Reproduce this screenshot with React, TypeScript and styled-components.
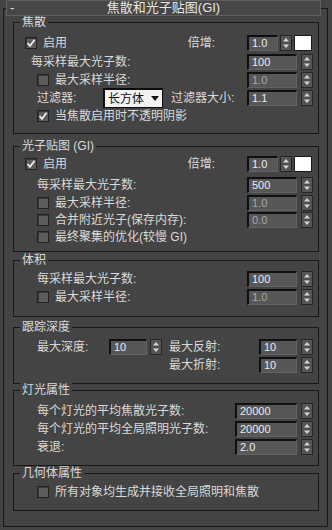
import React from "react";
import styled, { createGlobalStyle } from "styled-components";

const Global = createGlobalStyle`
  html, body { margin: 0; padding: 0; background: #444444; }
  body {
    width: 332px; height: 530px; overflow: hidden;
    font-family: "Liberation Sans", "Noto Sans CJK SC", sans-serif;
    font-size: 12px; color: #dadada;
  }
  * { box-sizing: border-box; }
`;

const Page = styled.div`
  width: 332px;
  height: 530px;
  display: flex;
  flex-direction: column;
`;

const Header = styled.div`
  position: relative;
  z-index: 1;
  margin-left: 6px;
  width: 315px;
  height: 16px;
  border: 1px solid #5f5f5f;
  background: #474747;
  display: grid;
  grid-template-columns: 20px 1fr 20px;
  align-items: center;
  line-height: 14px;
  color: #e6e6e6;
`;

const Minus = styled.span`
  margin-left: 3px;
  font-size: 13px;
`;

const Title = styled.span`
  text-align: center;
  font-size: 13px;
  white-space: nowrap;
`;

const Frame = styled.div`
  margin: -8px 0 0 3px;
  width: 325px;
  height: 519px;
  border: 1px solid #181818;
  padding: 13px 0 0 9px;
  display: flex;
  flex-direction: column;
`;

const Group = styled.div<{ $mt?: number }>`
  width: 306px;
  border: 1px solid #181818;
  margin-top: ${(p) => p.$mt ?? 0}px;
  display: flex;
  flex-direction: column;
`;

const Legend = styled.div`
  height: 0;
  margin: -1px 0 0 6px;
  display: flex;
  align-items: center;
`;

const LegendText = styled.span`
  background: #444444;
  padding: 0 2px;
  line-height: 14px;
  white-space: nowrap;
`;

const Body = styled.div<{ $pt: number; $pb: number }>`
  padding: ${(p) => p.$pt}px 5px ${(p) => p.$pb}px 0;
  display: flex;
  flex-direction: column;
`;

const Row = styled.div<{ $h?: number; $mt?: number }>`
  height: ${(p) => p.$h ?? 18}px;
  margin-top: ${(p) => p.$mt ?? 0}px;
  display: flex;
  align-items: center;
`;

const Label = styled.span<{ $ml?: number; $mr?: number; $w?: number }>`
  margin-left: ${(p) => p.$ml ?? 0}px;
  margin-right: ${(p) => p.$mr ?? 0}px;
  ${(p) => (p.$w ? `width: ${p.$w}px;` : "")}
  flex: none;
  white-space: nowrap;
  line-height: 16px;
`;

const Spacer = styled.span`
  flex: 1;
`;

const CheckBox = styled.span<{ $ml?: number }>`
  margin-left: ${(p) => p.$ml ?? 0}px;
  width: 12px;
  height: 12px;
  flex: none;
  border: 1px solid #222222;
  background: #5c5c5c;
  box-shadow: inset 1px 1px 0 #3a3a3a;
  display: flex;
  align-items: center;
  justify-content: center;
`;

const SpinBox = styled.span<{ $gap: number }>`
  display: flex;
  align-items: center;
  gap: ${(p) => p.$gap}px;
  flex: none;
`;

const Field = styled.span<{ $w: number; $dim?: boolean }>`
  width: ${(p) => p.$w}px;
  height: 16px;
  border-top: 2px solid #101010;
  border-left: 2px solid #101010;
  border-right: 1px solid #626262;
  border-bottom: 1px solid #626262;
  background: #575757;
  padding-left: 3px;
  font-family: "Liberation Sans", sans-serif;
  font-size: 11px;
  line-height: 13px;
  color: ${(p) => (p.$dim ? "#a8a8a8" : "#e8ecf2")};
`;

const Swatch = styled.span`
  width: 18px;
  height: 16px;
  margin-left: 2px;
  margin-right: 1px;
  background: #ffffff;
  border: 1px solid #1a1a1a;
  flex: none;
`;

const Dropdown = styled.span`
  width: 60px;
  height: 20px;
  flex: none;
  border: 1px solid #0c0c0c;
  border-top-width: 2px;
  border-left-width: 2px;
  background: #f2f2f2;
  color: #101010;
  display: flex;
  align-items: center;
  justify-content: space-between;
  padding: 0 3px 0 3px;
  line-height: 16px;
`;

const Check = ({ ml, on }: { ml?: number; on?: boolean }) => (
  <CheckBox $ml={ml}>
    {on && (
      <svg width="10" height="10" viewBox="0 0 10 10">
        <polyline points="1.5,5 4,7.8 8.6,1.8" fill="none" stroke="#ececec" strokeWidth="1.8" />
      </svg>
    )}
  </CheckBox>
);

const Arrows = () => (
  <svg width="12" height="16" viewBox="0 0 12 16" style={{ flex: "none" }}>
    <rect x="0.5" y="0.5" width="11" height="15" fill="#555555" stroke="#262626" />
    <line x1="1" y1="8" x2="11" y2="8" stroke="#4a4a4a" />
    <polygon points="3,6.5 9,6.5 6,3" fill="#d6d6d6" />
    <polygon points="3,9.5 9,9.5 6,13" fill="#d6d6d6" />
  </svg>
);

const Spinner = ({ w, v, dim, gap = 4 }: { w: number; v: string; dim?: boolean; gap?: number }) => (
  <SpinBox $gap={gap}>
    <Field $w={w} $dim={dim}>{v}</Field>
    <Arrows />
  </SpinBox>
);

const EnableRow = ({ h = 18 }: { h?: number }) => (
  <Row $h={h}>
    <Check ml={11} on />
    <Label $ml={6}>启用</Label>
    <Spacer />
    <Label $mr={32}>倍增:</Label>
    <Spinner w={31} v="1.0" gap={2} />
    <Swatch />
  </Row>
);

export default function App() {
  return (
    <Page>
      <Global />
      <Header>
        <Minus>-</Minus>
        <Title>焦散和光子贴图(GI)</Title>
        <span />
      </Header>
      <Frame>
        <Group>
          <Legend><LegendText>焦散</LegendText></Legend>
          <Body $pt={12} $pb={8}>
            <EnableRow />
            <Row $mt={1}>
              <Label $ml={17}>每采样最大光子数:</Label>
              <Spacer />
              <Spinner w={50} v="100" />
            </Row>
            <Row>
              <Check ml={23} />
              <Label $ml={6}>最大采样半径:</Label>
              <Spacer />
              <Spinner w={50} v="1.0" dim />
            </Row>
            <Row>
              <Label $ml={23} $w={66}>过滤器:</Label>
              <Dropdown>
                <span>长方体</span>
                <svg width="8" height="5" viewBox="0 0 8 5">
                  <polygon points="0,0 8,0 4,5" fill="#101010" />
                </svg>
              </Dropdown>
              <Label $ml={8}>过滤器大小:</Label>
              <Spacer />
              <Spinner w={50} v="1.1" />
            </Row>
            <Row>
              <Check ml={23} on />
              <Label $ml={6}>当焦散启用时不透明阴影</Label>
            </Row>
          </Body>
        </Group>

        <Group $mt={12}>
          <Legend><LegendText>光子贴图 (GI)</LegendText></Legend>
          <Body $pt={9} $pb={5}>
            <EnableRow />
            <Row $mt={3}>
              <Label $ml={23}>每采样最大光子数:</Label>
              <Spacer />
              <Spinner w={50} v="500" />
            </Row>
            <Row $h={17}>
              <Check ml={23} />
              <Label $ml={6}>最大采样半径:</Label>
              <Spacer />
              <Spinner w={50} v="1.0" dim />
            </Row>
            <Row $h={17}>
              <Check ml={23} />
              <Label $ml={6}>合并附近光子(保存内存):</Label>
              <Spacer />
              <Spinner w={50} v="0.0" dim />
            </Row>
            <Row>
              <Check ml={23} />
              <Label $ml={6}>最终聚集的优化(较慢 GI)</Label>
            </Row>
          </Body>
        </Group>

        <Group $mt={8}>
          <Legend><LegendText>体积</LegendText></Legend>
          <Body $pt={10} $pb={10}>
            <Row>
              <Label $ml={23}>每采样最大光子数:</Label>
              <Spacer />
              <Spinner w={50} v="100" />
            </Row>
            <Row>
              <Check ml={23} />
              <Label $ml={6}>最大采样半径:</Label>
              <Spacer />
              <Spinner w={50} v="1.0" dim />
            </Row>
          </Body>
        </Group>

        <Group $mt={10}>
          <Legend><LegendText>跟踪深度</LegendText></Legend>
          <Body $pt={11} $pb={9}>
            <Row>
              <Label $ml={23} $w={72}>最大深度:</Label>
              <Spinner w={38} v="10" gap={3} />
              <Label $ml={7}>最大反射:</Label>
              <Spacer />
              <Spinner w={38} v="10" />
            </Row>
            <Row>
              <Label $ml={155}>最大折射:</Label>
              <Spacer />
              <Spinner w={38} v="10" />
            </Row>
          </Body>
        </Group>

        <Group $mt={6}>
          <Legend><LegendText>灯光属性</LegendText></Legend>
          <Body $pt={12} $pb={9}>
            <Row>
              <Label $ml={23}>每个灯光的平均焦散光子数:</Label>
              <Spacer />
              <Spinner w={62} v="20000" />
            </Row>
            <Row>
              <Label $ml={23}>每个灯光的平均全局照明光子数:</Label>
              <Spacer />
              <Spinner w={62} v="20000" />
            </Row>
            <Row>
              <Label $ml={23}>衰退:</Label>
              <Spacer />
              <Spinner w={62} v="2.0" />
            </Row>
          </Body>
        </Group>

        <Group $mt={7}>
          <Legend><LegendText>几何体属性</LegendText></Legend>
          <Body $pt={10} $pb={9}>
            <Row>
              <Check ml={23} />
              <Label $ml={6}>所有对象均生成并接收全局照明和焦散</Label>
            </Row>
          </Body>
        </Group>
      </Frame>
    </Page>
  );
}
